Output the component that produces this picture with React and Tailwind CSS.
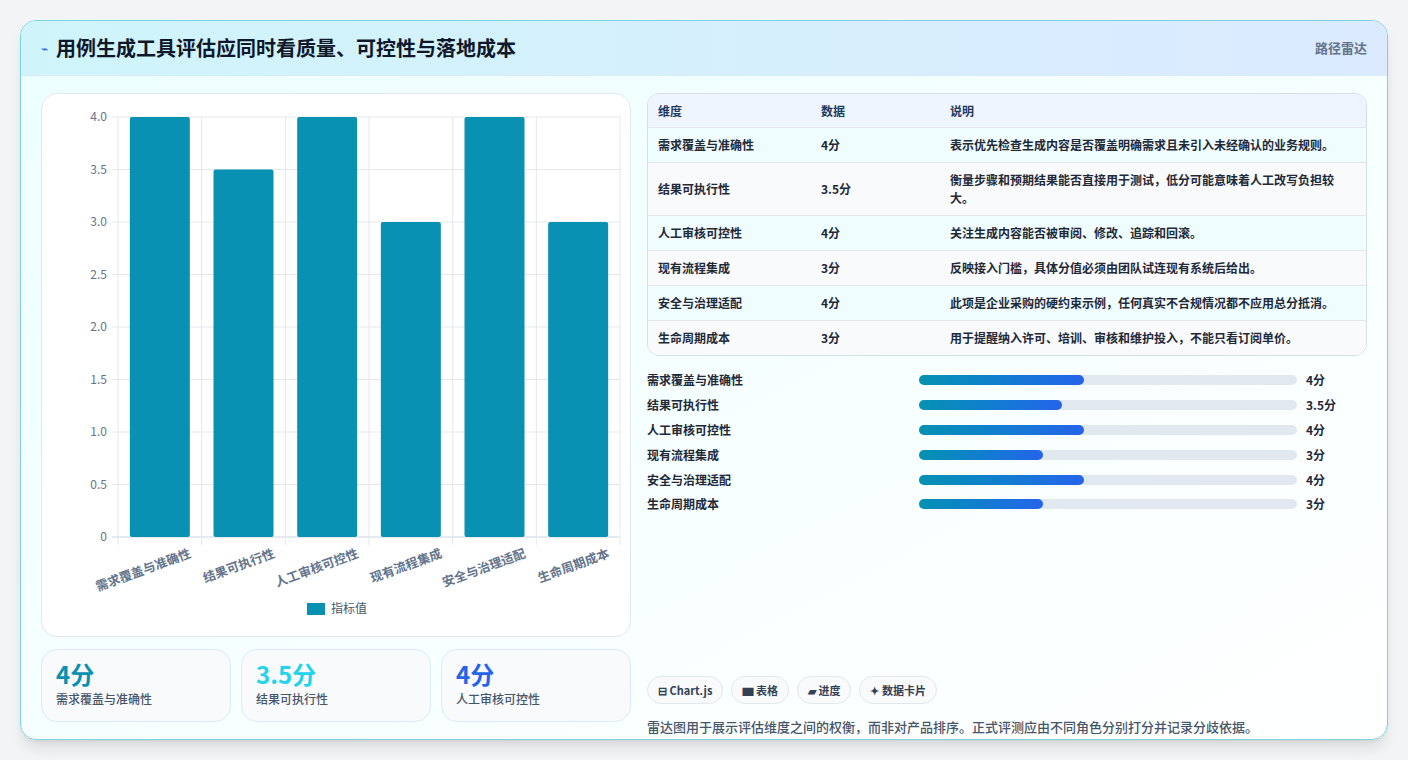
const dims = [
  { name: "需求覆盖与准确性", v: 4, d: "表示优先检查生成内容是否覆盖明确需求且未引入未经确认的业务规则。" },
  { name: "结果可执行性", v: 3.5, d: "衡量步骤和预期结果能否直接用于测试，低分可能意味着人工改写负担较大。" },
  { name: "人工审核可控性", v: 4, d: "关注生成内容能否被审阅、修改、追踪和回滚。" },
  { name: "现有流程集成", v: 3, d: "反映接入门槛，具体分值必须由团队试连现有系统后给出。" },
  { name: "安全与治理适配", v: 4, d: "此项是企业采购的硬约束示例，任何真实不合规情况都不应用总分抵消。" },
  { name: "生命周期成本", v: 3, d: "用于提醒纳入许可、培训、审核和维护投入，不能只看订阅单价。" },
];

const font = { fontFamily: '"Noto Sans CJK SC", "Noto Sans", sans-serif' };

function Chart() {
  const x0 = 76, x1 = 578, yt = 23, yb = 443;
  const cw = (x1 - x0) / 6;
  const ticks = [0, 0.5, 1, 1.5, 2, 2.5, 3, 3.5, 4];
  return (
    <svg width="590" height="543" viewBox="0 0 590 543" style={font}>
      {ticks.map((t) => {
        const y = yb - (t / 4) * (yb - yt);
        return (
          <g key={t}>
            <line x1={x0 - 6} x2={x1} y1={y} y2={y} stroke={t === 0 ? "#cbd5e1" : "#e5e7eb"} />
            <text x={x0 - 11} y={y + 4} textAnchor="end" fontSize="12" fill="#64748b">
              {t === 0 ? "0" : t.toFixed(1)}
            </text>
          </g>
        );
      })}
      {[0, 1, 2, 3, 4, 5, 6].map((i) => (
        <line key={i} x1={x0 + i * cw} x2={x0 + i * cw} y1={yt} y2={yb + 8} stroke="#e5e7eb" />
      ))}
      {dims.map((d, i) => {
        const cx = x0 + cw * i + cw / 2;
        const h = (d.v / 4) * (yb - yt);
        return (
          <g key={d.name}>
            <rect x={cx - 30} y={yb - h} width="60" height={h} rx="2" fill="#0891b2" />
            <text
              x={cx + 32}
              y={yb + 20}
              textAnchor="end"
              fontSize="12.5"
              fontWeight="600"
              fill="#64748b"
              transform={`rotate(-20 ${cx + 32} ${yb + 20})`}
            >
              {d.name}
            </text>
          </g>
        );
      })}
      <rect x="265" y="509" width="18" height="12" fill="#0891b2" />
      <text x="289" y="519" fontSize="12" fill="#475569">指标值</text>
    </svg>
  );
}

const pct = { 4: "43.6%", 3.5: "37.8%", 3: "32.7%" };

export default function App() {
  return (
    <div className="w-[1408px] h-[760px] bg-[#f3f4f6] p-5" style={font}>
      <div className="h-[720px] rounded-2xl border border-[#7dd3e0] overflow-hidden bg-gradient-to-br from-[#ecfeff] to-[#ffffff] shadow-lg flex flex-col">
        <div className="h-[55px] flex items-center justify-between px-5 bg-gradient-to-r from-[#cff5fb] to-[#dbeafe] border-b border-[#d6eef3]">
          <div className="flex items-center gap-2">
            <span className="text-[#2563eb] text-xs">⌁</span>
            <span className="text-[20px] font-bold text-[#0f172a]">用例生成工具评估应同时看质量、可控性与落地成本</span>
          </div>
          <span className="text-[13px] font-semibold text-[#64748b]">路径雷达</span>
        </div>
        <div className="flex gap-4 px-5 pt-[17px]">
          <div className="w-[590px] flex flex-col gap-3">
            <div className="h-[544px] rounded-2xl border border-[#e2e8f0] bg-white">
              <Chart />
            </div>
            <div className="flex gap-[10px]">
              {[["4分", "text-[#0891b2]", 0], ["3.5分", "text-[#22d3ee]", 1], ["4分", "text-[#2563eb]", 2]].map(([v, c, i]) => (
                <div key={i} className="w-[190px] h-[73px] rounded-2xl border border-[#dbeafe] bg-[#f8fafc] px-[14px] pt-2">
                  <div className={`text-[24px] font-bold leading-8 ${c}`}>{v}</div>
                  <div className="text-[12px] text-[#475569] font-medium">{dims[i].name}</div>
                </div>
              ))}
            </div>
          </div>
          <div className="w-[722px] flex flex-col">
            <div className="rounded-xl border border-[#d6dfe9] overflow-hidden text-[12px] font-semibold text-[#1f2937]">
              <div className="flex h-[33px] items-center bg-[#eef5ff] text-[#1e3a5f]">
                <div className="w-[173px] pl-[10px]">维度</div>
                <div className="w-[129px]">数据</div>
                <div className="flex-1">说明</div>
              </div>
              {dims.map((d, i) => (
                <div key={d.name} className={`flex items-center border-t border-[#e5e7eb] ${i === 1 ? "h-[53px]" : "h-[35px]"} ${i % 2 ? "bg-[#f8fafc]" : "bg-[#f0fdff]"}`}>
                  <div className="w-[173px] pl-[10px]">{d.name}</div>
                  <div className="w-[129px]">{d.v}分</div>
                  <div className="flex-1 pr-6 leading-[18px]">{d.d}</div>
                </div>
              ))}
            </div>
            <div className="mt-[12px] flex flex-col">
              {dims.map((d) => (
                <div key={d.name} className="flex items-center h-[24.8px] text-[12px] font-semibold text-[#1f2937]">
                  <div className="w-[272px]">{d.name}</div>
                  <div className="w-[378px] h-[10px] rounded-full bg-[#e2e8f0]">
                    <div className="h-full rounded-full bg-gradient-to-r from-[#0891b2] to-[#2563eb]" style={{ width: pct[d.v] }} />
                  </div>
                  <div className="ml-[9px]">{d.v}分</div>
                </div>
              ))}
            </div>
            <div className="mt-[159px] flex gap-[8px] text-[11px] font-semibold text-[#334155]">
              {["⊟ Chart.js", "▆ 表格", "▰ 进度", "✦ 数据卡片"].map((t) => (
                <div key={t} className="h-[28px] px-[10px] flex items-center rounded-full border border-[#e2e8f0] bg-[#f8fafc]">{t}</div>
              ))}
            </div>
            <div className="mt-[13px] text-[13px] font-medium text-[#475569]">
              雷达图用于展示评估维度之间的权衡，而非对产品排序。正式评测应由不同角色分别打分并记录分歧依据。
            </div>
          </div>
        </div>
      </div>
    </div>
  );
}
